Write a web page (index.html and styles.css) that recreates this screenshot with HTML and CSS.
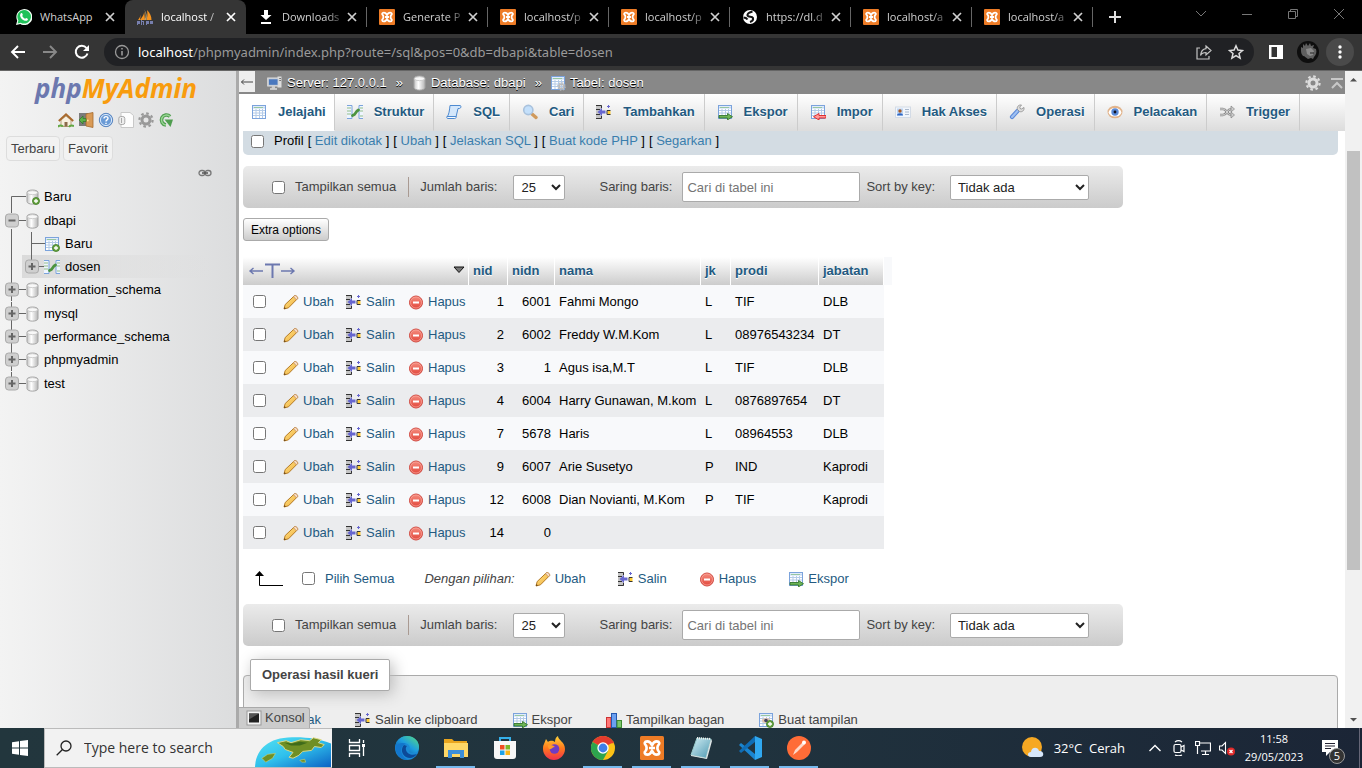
FILE: index.html
```html
<!DOCTYPE html>
<html lang="id">
<head>
<meta charset="utf-8">
<title>localhost / 127.0.0.1 / dbapi / dosen | phpMyAdmin</title>
<link rel="stylesheet" href="styles.css">
</head>
<body>
<svg class="defs" width="0" height="0" aria-hidden="true">
  <defs>
    <linearGradient id="g-db" x1="0" x2="1" y1="0" y2="0"><stop offset="0" stop-color="#c4c4c4"/><stop offset=".4" stop-color="#fff"/><stop offset="1" stop-color="#b4b4b4"/></linearGradient>
    <linearGradient id="g-pen" x1="0" x2="1" y1="0" y2="1"><stop offset="0" stop-color="#ffe98a"/><stop offset="1" stop-color="#f0a93a"/></linearGradient>
    <linearGradient id="g-red" x1="0" x2="0" y1="0" y2="1"><stop offset="0" stop-color="#f58e80"/><stop offset="1" stop-color="#e2463b"/></linearGradient>
    <linearGradient id="g-edge" x1="0" x2="1" y1="1" y2="0"><stop offset="0" stop-color="#0b4a9e"/><stop offset=".5" stop-color="#1d9de0"/><stop offset="1" stop-color="#5be07a"/></linearGradient>
    <linearGradient id="g-fox" x1="0" x2="0" y1="0" y2="1"><stop offset="0" stop-color="#ffd53a"/><stop offset=".5" stop-color="#ff7a1c"/><stop offset="1" stop-color="#f0304e"/></linearGradient>
    <linearGradient id="g-sea" x1="0" x2="1" y1="0" y2="1"><stop offset="0" stop-color="#57e3f2"/><stop offset=".5" stop-color="#2fc0ec"/><stop offset="1" stop-color="#0c62c4"/></linearGradient>
    <linearGradient id="g-note" x1="0" x2="1" y1="0" y2="1"><stop offset="0" stop-color="#d5f0f5"/><stop offset="1" stop-color="#4d98b2"/></linearGradient>
  </defs>
  <symbol id="whatsapp" viewBox="0 0 16 16"><path d="M0 16l1.200-4.300A8 8 0 1 1 4.300 15z" fill="#f4fff6"/><path d="M1.600 14.400l.8-3A6.800 6.800 0 1 1 4.800 13.700z" fill="#20c25a"/><path d="M5 4.200c.6-.4 1.100-.2 1.300.4l.5 1.200c.2.500-.6 1-.6 1.300.6 1.200 1.500 2 2.700 2.600.4.200.8-1 1.300-.8l1.500.8c.3.200.3.600 0 1.200-.5.900-1.700 1.200-2.900.8C6.300 10.900 4.900 9.300 4.200 7.300 3.900 6.200 4.200 4.900 5 4.200z" fill="#fff"/></symbol>
  <symbol id="sails" viewBox="0 0 16 16"><path d="M7 0c1 4-1 7.500-4 11h5zM10 1c3 3 4.500 6 4.500 10H9.500c1-3 1.200-7 .5-10zM4 4c0 2.500-1.500 5-3 7h2z" fill="#f6931e"/><path d="M7.500 1c1.500 3 1.500 7 0 10h2c.7-3 .5-7-2-10z" fill="#b8a070"/><path d="M0 12h3v3H1v1H0zm4-1h1v1h2v4H6v-3H5v3H4zm5 1h3v3h-2v1H9zm4 0h3v3h-3z" fill="#777fae"/></symbol>
  <symbol id="download" viewBox="0 0 16 16"><path d="M6 1h4v5h3.500L8 11 2.500 6H6zM3 13h10v2H3z" fill="#fff"/></symbol>
  <symbol id="xampp" viewBox="0 0 16 16"><rect width="16" height="16" rx="1" fill="#ee7c26"/><path d="M8 6.200C7 3.700 5.800 3.600 4.800 3.600 3 3.600 2.700 5.200 3.700 6c.7.600.7 1.100.7 2s0 1.400-.7 2c-1 .8-.7 2.400 1.100 2.400 1 0 2.200-.1 3.200-2.600 1 2.500 2.200 2.600 3.200 2.600 1.800 0 2.100-1.600 1.100-2.400-.7-.6-.7-1.100-.7-2s0-1.400.7-2c1-.8.700-2.400-1.100-2.400-1 0-2.200.1-3.200 2.600zM6 8h4" fill="none" stroke="#fff" stroke-width="1.800" stroke-linejoin="round"/></symbol>
  <symbol id="globe" viewBox="0 0 16 16"><circle cx="8" cy="8" r="7" fill="#fff"/><path d="M10.500 2.500C7 3.500 5 4.500 5.500 6.500 6.500 8.500 10 7 11 9c.5 2-1.500 3.500-3 4M1.500 8.500c2 0 3 .5 4 2" fill="none" stroke="#111" stroke-width="2"/></symbol>
  <symbol id="x" viewBox="0 0 12 12"><path d="M2 2l8 8M10 2l-8 8" stroke="currentColor" stroke-width="1.700"/></symbol>
  <symbol id="gear" viewBox="0 0 16 16"><circle cx="8" cy="8" r="6.600" fill="none" stroke="currentColor" stroke-width="2.200" stroke-dasharray="2.590"/><circle cx="8" cy="8" r="4" fill="none" stroke="currentColor" stroke-width="3"/></symbol>
  <symbol id="db" viewBox="0 0 16 16"><path d="M3 3.500v9C3 16 14 16 14 12.500v-9C14 .2 3 .2 3 3.500z" fill="url(#g-db)" stroke="#a4a4a4"/><ellipse cx="8.500" cy="3.700" rx="5" ry="2" fill="#f8f8f8" stroke="#bbb" stroke-width=".7"/></symbol>
  <symbol id="plus" viewBox="0 0 8 8"><circle cx="4" cy="4" r="3.500" fill="#6aa544" stroke="#3c7a22" stroke-width=".8"/><path d="M4 2v4M2 4h4" stroke="#fff" stroke-width="1.300"/></symbol>
  <symbol id="tbl" viewBox="0 0 16 16"><rect x="1.500" y="1.500" width="13" height="13" fill="#fff" stroke="#7ba3dc"/><path d="M2 3.500h12" stroke="#c3d9f5" stroke-width="2"/><path d="M2 6.500h12M2 9h12M2 11.500h12M5 5v9M8.500 5v9M11.500 5v9" stroke="#b4cbe8" stroke-width="1"/><path d="M3 3.500h9" stroke="#8cc28a" stroke-width=".8"/></symbol>
  <symbol id="struct" viewBox="0 0 16 16"><path d="M0 1.500h5v13H0M16 1.500h-4v13h4" fill="#eef5ff" stroke="#7ba3dc"/><path d="M0 4h4M0 7h4M0 10h4M13 4h3M13 7h3M13 12h3" stroke="#93bd85"/><path d="M5.500 11.500l2-1L10 7l1.500-1" fill="none" stroke="#4c9440" stroke-width="2.800" stroke-linecap="round"/></symbol>
  <symbol id="server" viewBox="0 0 16 16"><path d="M10 1h5v12h-5z" fill="#ddd" stroke="#888"/><path d="M11 3.500h3M11 5.500h3" stroke="#777"/><rect x=".7" y="3" width="11" height="8" fill="#b8c2d0" stroke="#ddd"/><rect x="2" y="4.300" width="8.500" height="5.500" fill="#4a78be"/><path d="M5 11h3v2.500H4.500z" fill="#ccc"/><path d="M3 14h7" stroke="#ddd" stroke-width="1.500"/></symbol>
  <symbol id="sql" viewBox="0 0 16 16"><path d="M4 1.500h10c1.500 0 1 3-.5 3H12L10 13H1c2-2 2.500-7 3-11.500z" fill="#d4e7fb" stroke="#4e8ad0"/><path d="M1 12.500h9c.3 1 0 2-1.300 2H2C.5 14.500.500 13 1 12.500z" fill="#f7fbff" stroke="#4e8ad0"/></symbol>
  <symbol id="find" viewBox="0 0 16 16"><path d="M10 10l4 3.500" stroke="#d09a5c" stroke-width="3.400" stroke-linecap="round"/><circle cx="6.300" cy="6" r="4.600" fill="#c4e0fb" stroke="#a9c2dd" stroke-width="1.600"/></symbol>
  <symbol id="insert" viewBox="0 0 16 16"><path d="M0 1h6v4H0zM0 11h6v4H0zM0 6h3v4H0z" fill="#c4c4c4"/><path d="M0 1.500h5.500v2.500M0 5.500h4M0 10.500h4M5.500 12v2.500H0" fill="none" stroke="#333"/><path d="M1.500 8L6 4v2.500h3.500v3H6V12z" fill="#6767cf"/><rect x="11.500" y="7" width="3" height="3.500" fill="#fc3"/><path d="M14.500 6.500h-3.500v4h3.500" fill="none" stroke="#333"/><path d="M12.500 1v3M11 2.500h3" stroke="#6767cf"/></symbol>
  <symbol id="export" viewBox="0 0 16 16"><use href="#tbl"/><path d="M2 11.500h8.500V9.500L15.500 12.700l-5 3.200V14H2z" fill="#6cb456" stroke="#2c6e22" stroke-width=".8"/></symbol>
  <symbol id="import" viewBox="0 0 16 16"><use href="#tbl"/><path d="M16 11.500H9v-2L3.500 12.700 9 16v-2h7z" fill="#f99" stroke="#d22" stroke-width=".9"/></symbol>
  <symbol id="priv" viewBox="0 0 16 16"><rect x=".5" y="3" width="15" height="10.500" fill="#f2f6fc" stroke="#d3dbe6"/><rect x="2" y="4.500" width="6" height="7" fill="#bcd5f5"/><circle cx="5" cy="7" r="1.700" fill="#a65a25"/><path d="M2 11.500c0-3 6-3 6 0z" fill="#2d66c4"/><path d="M10 5.500h4M10 8h4M10 10.500h4" stroke="#a9b8cc"/></symbol>
  <symbol id="wrench" viewBox="0 0 16 16"><path d="M8.500 7L3 13" stroke="#5d8ad8" stroke-width="4.200" stroke-linecap="round"/><path d="M8.500 7L3 13" stroke="#9fc0f2" stroke-width="2" stroke-linecap="round"/><path d="M12.500 1c-3-.5-5 2-4 4.500l2 2c2.500 1 5-1 4.500-4L12.500 5 11 4.500 10.800 3z" fill="#ddd" stroke="#8a8a8a" stroke-width=".8"/></symbol>
  <symbol id="eye" viewBox="0 0 16 16"><ellipse cx="8" cy="8" rx="7.500" ry="6.300" fill="#e2b48c"/><ellipse cx="8" cy="8.300" rx="6.300" ry="4.300" fill="#fff"/><circle cx="8" cy="8" r="3.700" fill="#5a8ad8"/><circle cx="8" cy="8" r="1.400" fill="#112"/></symbol>
  <symbol id="trigger" viewBox="0 0 16 16"><path d="M1 5h3c4 0 4 6 8 6h1M1 11h3c4 0 4-6 8-6h1" fill="none" stroke="#888" stroke-width="2.600"/><path d="M1 5h3c4 0 4 6 8 6h1M1 11h3c4 0 4-6 8-6h1" fill="none" stroke="#ddd" stroke-width="1"/><path d="M12 2l3.500 3L12 8zM12 8l3.500 3-3.500 3z" fill="#ccc" stroke="#777" stroke-width=".6"/></symbol>
  <symbol id="pencil" viewBox="0 0 16 16"><path d="M1 15l1.200-4.500L11.500 1.700c1-1 4 1.800 3 3L5.500 13.800z" fill="url(#g-pen)" stroke="#b57a24"/><path d="M10.500 2.700l1.200-1.100c1-.8 3.700 1.900 2.900 3l-1.200 1.200z" fill="#f8dcc4" stroke="#bb8a5c" stroke-width=".7"/><path d="M1 15l.6-2 1.300 1.400z" fill="#5b3d17"/></symbol>
  <symbol id="del" viewBox="0 0 16 16"><circle cx="8" cy="8.500" r="6.500" fill="url(#g-red)" stroke="#d0483f"/><circle cx="8" cy="8.500" r="5.500" fill="none" stroke="#f9a79d" stroke-width=".7"/><path d="M5 8.500h6" stroke="#fff" stroke-width="2"/></symbol>
  <symbol id="chart" viewBox="0 0 16 16"><rect x=".5" y="5.500" width="4.500" height="10" fill="#f77" stroke="#c33"/><rect x="5.500" y="1.500" width="5" height="14" fill="#6ca0f0" stroke="#2558b0"/><rect x="11" y="8.500" width="4.500" height="7" fill="#7cc56c" stroke="#3c8a30"/></symbol>
  <symbol id="console" viewBox="0 0 16 16"><rect x="1" y="1" width="14" height="14" fill="#f4f4f4" stroke="#999"/><rect x="3" y="3.500" width="10" height="9" fill="#222"/><path d="M3 3.500h10l-10 6z" fill="#555"/></symbol>
  <symbol id="t-first" viewBox="0 0 24 23"><path d="M24 11.500H9.500V23" fill="none" stroke="#666"/></symbol>
  <symbol id="t-box" viewBox="0 0 24 23"><rect x="3.500" y="5" width="13" height="13" rx="3" fill="#cfcfcf" stroke="#aaa"/><path d="M6.500 11.500h7" stroke="#666" stroke-width="2"/></symbol>
  <symbol id="t-minus" viewBox="0 0 24 23"><path d="M9.500 0v4M9.500 20v3M16 11.500h8" stroke="#666"/><use href="#t-box"/></symbol>
  <symbol id="t-plus" viewBox="0 0 24 23"><path d="M9.500 0v23M16 11.500h8" stroke="#666"/><use href="#t-box"/><path d="M10 8v7" stroke="#666" stroke-width="2"/></symbol>
  <symbol id="t-last" viewBox="0 0 24 23"><path d="M9.500 0v6M16 11.500h8" stroke="#666"/><use href="#t-box"/><path d="M10 8v7" stroke="#666" stroke-width="2"/></symbol>
  <symbol id="t-line" viewBox="0 0 20 23"><path d="M9.500 0v23" stroke="#666"/></symbol>
  <symbol id="t-tee" viewBox="0 0 24 23"><path d="M9.500 0v23M9.500 11.500H24" stroke="#666"/></symbol>
</svg>

<header class="tabstrip">
  <div class="tab"><svg class="i16"><use href="#whatsapp"/></svg><span class="tab-title">WhatsApp</span><button class="tab-x" aria-label="Tutup"><svg><use href="#x"/></svg></button></div>
  <div class="tab active"><svg class="i16"><use href="#sails"/></svg><span class="tab-title">localhost /</span><button class="tab-x" aria-label="Tutup"><svg><use href="#x"/></svg></button></div>
  <div class="tab line"><svg class="i16"><use href="#download"/></svg><span class="tab-title">Downloads</span><button class="tab-x" aria-label="Tutup"><svg><use href="#x"/></svg></button></div>
  <div class="tab line"><svg class="i16"><use href="#xampp"/></svg><span class="tab-title">Generate P</span><button class="tab-x" aria-label="Tutup"><svg><use href="#x"/></svg></button></div>
  <div class="tab line"><svg class="i16"><use href="#xampp"/></svg><span class="tab-title">localhost/p</span><button class="tab-x" aria-label="Tutup"><svg><use href="#x"/></svg></button></div>
  <div class="tab line"><svg class="i16"><use href="#xampp"/></svg><span class="tab-title">localhost/p</span><button class="tab-x" aria-label="Tutup"><svg><use href="#x"/></svg></button></div>
  <div class="tab line"><svg class="i16"><use href="#globe"/></svg><span class="tab-title">https://dl.d</span><button class="tab-x" aria-label="Tutup"><svg><use href="#x"/></svg></button></div>
  <div class="tab line"><svg class="i16"><use href="#xampp"/></svg><span class="tab-title">localhost/a</span><button class="tab-x" aria-label="Tutup"><svg><use href="#x"/></svg></button></div>
  <div class="tab line"><svg class="i16"><use href="#xampp"/></svg><span class="tab-title">localhost/a</span><button class="tab-x" aria-label="Tutup"><svg><use href="#x"/></svg></button></div>
  <button class="newtab" aria-label="Tab baru"><svg class="i16" viewBox="0 0 16 16"><path d="M8 2v12M2 8h12" stroke="#ddd" stroke-width="2"/></svg></button>
  <div class="winctl">
    <button aria-label="Cari tab"><svg viewBox="0 0 12 12"><path d="M1 3l5 5 5-5" fill="none" stroke="#777"/></svg></button>
    <button aria-label="Kecilkan"><svg viewBox="0 0 12 12"><path d="M1 6.500h10" stroke="#777"/></svg></button>
    <button aria-label="Pulihkan"><svg viewBox="0 0 12 12"><path d="M1.500 3.500h7v7h-7zM3.500 3V1.500h7v7H9" fill="none" stroke="#777"/></svg></button>
    <button aria-label="Tutup jendela"><svg viewBox="0 0 12 12"><path d="M1 1l10 10M11 1L1 11" stroke="#777"/></svg></button>
  </div>
</header>

<div class="toolbar">
  <button aria-label="Kembali"><svg class="i16" viewBox="0 0 16 16"><path d="M15 8H2.500M8 2L2 8l6 6" fill="none" stroke="#fff" stroke-width="1.900"/></svg></button>
  <button aria-label="Maju"><svg class="i16" viewBox="0 0 16 16"><path d="M1 8h12.500M8 2l6 6-6 6" fill="none" stroke="#888" stroke-width="1.900"/></svg></button>
  <button aria-label="Muat ulang"><svg class="i16" viewBox="0 0 16 16"><path d="M13.500 9.500A6 6 0 1 1 12.500 4L14 5.500" fill="none" stroke="#fff" stroke-width="2"/><path d="M15 1v6H9z" fill="#fff"/></svg></button>
  <div class="omnibox">
    <svg class="i16" viewBox="0 0 16 16"><circle cx="8" cy="8" r="6.500" fill="none" stroke="#999" stroke-width="1.300"/><path d="M8 7v4.500M8 4v1.600" stroke="#999" stroke-width="1.600"/></svg>
    <a class="url" href="#"><b>localhost</b>/phpmyadmin/index.php?route=/sql&amp;pos=0&amp;db=dbapi&amp;table=dosen</a>
    <svg class="i16" viewBox="0 0 16 16"><path d="M4 4H1v11h12v-3" fill="none" stroke="#c4c4c4" stroke-width="1.200"/><path d="M10 2l5 4.500-5 4.500V8.500c-3 0-4.500 1-5.500 3C5 7.500 7 5 10 4.700z" fill="none" stroke="#c4c4c4" stroke-width="1.200"/></svg>
    <svg class="i16" viewBox="0 0 16 16"><path d="M8 1.800l1.900 4.300 4.600.4-3.500 3 1.100 4.600L8 11.600l-4.100 2.500L5 9.500l-3.500-3 4.600-.4z" fill="none" stroke="#ddd" stroke-width="1.500"/></svg>
  </div>
  <button aria-label="Panel samping"><svg class="i16" viewBox="0 0 16 16"><path d="M1 1h14v14H1zM3.500 3v10H9V3z" fill="#fff" fill-rule="evenodd"/></svg></button>
  <button aria-label="Profil"><svg class="i22" viewBox="0 0 22 22"><circle cx="11" cy="11" r="11" fill="#0e0e0e"/><path d="M4 10l0-4 2 1 0-4 2 2 1-3 2 3 2-3 1 3 3-1-1 3 3 1c1 3 0 6-2 8l-1 2-2-1-3 1c-2-1-3-3-5-3-1-1-2-3-2-5z" fill="#5f5f5f"/><path d="M9 8l5-1 3 3-1 4-3 1-3-2z" fill="#8a8a8a"/><path d="M13 12h4" stroke="#222"/></svg></button>
  <button class="menu" aria-label="Menu"><svg class="i16" viewBox="0 0 16 16"><g fill="#fff"><circle cx="8" cy="3" r="1.700"/><circle cx="8" cy="8" r="1.700"/><circle cx="8" cy="13" r="1.700"/></g></svg></button>
</div>

<main class="page">
  <nav class="sidebar">
    <a class="logo" href="#"><span>php</span>MyAdmin</a>
    <div class="quick">
      <svg viewBox="0 0 16 16"><path d="M3 8v6.500h10V8L8 4z" fill="#f7efdf" stroke="#b9a27c"/><path d="M.8 9L8 2.300 15.200 9" fill="none" stroke="#a8682c" stroke-width="2"/><path d="M6.500 14.500V10h3v4.500" fill="#8a6a4a"/><path d="M0 15c1-2 4-2 5-.5M11 15c1-2 4-2 5-.5" stroke="#62a844" stroke-width="2" fill="none"/></svg>
      <svg viewBox="0 0 16 16"><path d="M1 1h9v13H1z" fill="#7b7b7b"/><path d="M8 2l7-1.500v15L8 14z" fill="#d99a55" stroke="#a5692f" stroke-width=".8"/><circle cx="9.800" cy="8.500" r=".9" fill="#ffe79b"/><path d="M1 8l4-4v2.500h3v3H5V12z" fill="#5cb14a" stroke="#2e7a26" stroke-width=".7"/></svg>
      <svg viewBox="0 0 16 16"><circle cx="8" cy="8" r="6.700" fill="#6a9bd6" stroke="#5a86c0"/><circle cx="8" cy="8" r="5.600" fill="none" stroke="#dbe9fa"/><path d="M6 6.500c0-2.500 4-2.500 4-.2C10 8 8 7.800 8 9.500M8 10.700v1.300" fill="none" stroke="#fff" stroke-width="1.400"/></svg>
      <svg viewBox="0 0 16 16"><path d="M3 .5h9l3.500 3v12H3z" fill="#fdfdfd" stroke="#c8c8c8"/><rect x=".8" y="4.500" width="6" height="8" rx="2" fill="#eee" stroke="#aaa"/><path d="M3.500 6v5" stroke="#aaa"/></svg>
      <svg class="g-grey" viewBox="0 0 16 16"><use href="#gear"/></svg>
      <svg viewBox="0 0 16 16"><path d="M12 4.500A5 5 0 1 0 8 13" fill="none" stroke="#4f9d4f" stroke-width="3.600"/><path d="M12 4.500A5 5 0 1 0 8 13" fill="none" stroke="#9ad795" stroke-width="1.400"/><path d="M6.500 7.500H15L12.500 15z" fill="#4f9d4f"/></svg>
    </div>
    <div class="recent"><button>Terbaru</button><button>Favorit</button></div>
    <div class="linkrow"><svg width="14" height="8" viewBox="0 0 14 8"><rect x="1" y="1.500" width="6" height="5" rx="2.500" fill="none" stroke="#777" stroke-width="1.300"/><rect x="7" y="1.500" width="6" height="5" rx="2.500" fill="none" stroke="#777" stroke-width="1.300"/><path d="M4 4h6" stroke="#555" stroke-width="1.500"/></svg></div>
    <ul class="tree">
      <li><div class="node"><svg class="tc"><use href="#t-first"/></svg><svg class="ico" viewBox="2 0 14 16"><use href="#db" width="16" height="16"/><use href="#plus" x="8" y="8" width="8" height="8"/></svg><a href="#">Baru</a></div></li>
      <li><div class="node"><svg class="tc"><use href="#t-minus"/></svg><svg class="ico" viewBox="2 0 14 16"><use href="#db" width="16" height="16"/></svg><a href="#">dbapi</a></div>
        <ul>
          <li class="node"><svg class="tl"><use href="#t-line"/></svg><svg class="tc"><use href="#t-tee"/></svg><svg class="ico2" viewBox="0 0 16 16"><use href="#tbl"/><use href="#plus" x="8" y="8" width="8" height="8"/></svg><a href="#">Baru</a></li>
          <li class="node"><svg class="tl"><use href="#t-line"/></svg><div class="node current"><svg class="tc"><use href="#t-last"/></svg><svg class="ico2" viewBox="0 0 16 16"><use href="#struct"/></svg><a href="#">dosen</a></div></li>
        </ul></li>
      <li><div class="node"><svg class="tc"><use href="#t-plus"/></svg><svg class="ico" viewBox="2 0 14 16"><use href="#db" width="16" height="16"/></svg><a href="#">information_schema</a></div></li>
      <li><div class="node"><svg class="tc"><use href="#t-plus"/></svg><svg class="ico" viewBox="2 0 14 16"><use href="#db" width="16" height="16"/></svg><a href="#">mysql</a></div></li>
      <li><div class="node"><svg class="tc"><use href="#t-plus"/></svg><svg class="ico" viewBox="2 0 14 16"><use href="#db" width="16" height="16"/></svg><a href="#">performance_schema</a></div></li>
      <li><div class="node"><svg class="tc"><use href="#t-plus"/></svg><svg class="ico" viewBox="2 0 14 16"><use href="#db" width="16" height="16"/></svg><a href="#">phpmyadmin</a></div></li>
      <li><div class="node"><svg class="tc"><use href="#t-last"/></svg><svg class="ico" viewBox="2 0 14 16"><use href="#db" width="16" height="16"/></svg><a href="#">test</a></div></li>
    </ul>
  </nav>
  <div class="resizer"></div>

  <section class="content">
    <div class="crumbs">
      <button class="collapse" aria-label="Sembunyikan panel"><svg width="14" height="8" viewBox="0 0 14 8"><path d="M1.500 4H13M4 1.500L1.500 4 4 6.500" fill="none" stroke="#444"/></svg></button>
      <svg class="i16"><use href="#server"/></svg><a href="#">Server: 127.0.0.1</a><span class="sep">»</span>
      <svg class="i16"><use href="#db"/></svg><a href="#">Database: dbapi</a><span class="sep">»</span>
      <svg class="i16" viewBox="0 0 16 16"><use href="#tbl"/><use href="#gear" x="7" y="7" width="9" height="9" color="#bbb"/></svg><a href="#">Tabel: dosen</a>
      <svg class="i16 set" viewBox="0 0 16 16"><use href="#gear"/></svg>
      <svg class="i16" viewBox="0 0 16 16"><path d="M2 4h12M3 13l5-5 5 5" fill="none" stroke="#c8c8c8" stroke-width="2"/></svg>
    </div>
    <nav class="topmenu">
      <a class="on" href="#"><svg class="i16"><use href="#tbl"/></svg>Jelajahi</a>
      <a href="#"><svg class="i16"><use href="#struct"/></svg>Struktur</a>
      <a href="#"><svg class="i16"><use href="#sql"/></svg>SQL</a>
      <a href="#"><svg class="i16"><use href="#find"/></svg>Cari</a>
      <a href="#"><svg class="i16"><use href="#insert"/></svg>Tambahkan</a>
      <a href="#"><svg class="i16"><use href="#export"/></svg>Ekspor</a>
      <a href="#"><svg class="i16"><use href="#import"/></svg>Impor</a>
      <a href="#"><svg class="i16"><use href="#priv"/></svg>Hak Akses</a>
      <a href="#"><svg class="i16"><use href="#wrench"/></svg>Operasi</a>
      <a href="#"><svg class="i16"><use href="#eye"/></svg>Pelacakan</a>
      <a href="#"><svg class="i16"><use href="#trigger"/></svg>Trigger</a>
    </nav>
    <div class="inner">
      <div class="profile"><input type="checkbox" id="profil"><label for="profil">Profil</label><span>[ <a href="#">Edit dikotak</a> ]</span><span>[ <a href="#">Ubah</a> ]</span><span>[ <a href="#">Jelaskan SQL</a> ]</span><span>[ <a href="#">Buat kode PHP</a> ]</span><span>[ <a href="#">Segarkan</a> ]</span></div>

      <form class="navbar">
        <input type="checkbox" id="all1"><label class="lab-all" for="all1">Tampilkan semua</label>
        <label class="lab-rows" for="rows1">Jumlah baris:</label><select class="rows" id="rows1"><option>25</option></select>
        <label class="lab-filter" for="filter1">Saring baris:</label><input class="filter" type="text" id="filter1" placeholder="Cari di tabel ini">
        <label class="lab-sort" for="sort1">Sort by key:</label><select class="sort" id="sort1"><option>Tidak ada</option></select>
      </form>

      <button class="extra">Extra options</button>

      <table class="results">
        <colgroup><col class="c-check"><col class="c-edit"><col class="c-copy"><col class="c-del"><col class="c-nid"><col class="c-nidn"><col class="c-nama"><col class="c-jk"><col class="c-prodi"><col class="c-jab"><col class="c-end"></colgroup>
        <thead><tr>
          <th colspan="4"><div class="corner"><svg width="48" height="18" viewBox="0 0 48 18"><path d="M2 9h13M5.500 6L2 9l3.500 3M46 9H33M42.500 6l3.500 3-3.500 3" fill="none" stroke="#6c78af" stroke-width="1.400"/><path d="M17 2.500h15M24.500 2.500V16" stroke="#6c78af" stroke-width="2"/></svg><svg width="12" height="10" viewBox="0 0 12 10"><path d="M1 1h10L6 6.500z" fill="#777" stroke="#111"/></svg></div></th>
          <th>nid</th><th>nidn</th><th>nama</th><th>jk</th><th>prodi</th><th>jabatan</th><th class="end"></th>
        </tr></thead>
        <tbody>
          <tr><td><input type="checkbox" aria-label="Pilih baris 1"></td><td><a class="act" href="#"><svg class="i16"><use href="#pencil"/></svg>Ubah</a></td><td><a class="act" href="#"><svg class="i16"><use href="#insert"/></svg>Salin</a></td><td><a class="act" href="#"><svg class="i16"><use href="#del"/></svg>Hapus</a></td><td class="n">1</td><td class="n">6001</td><td>Fahmi Mongo</td><td>L</td><td>TIF</td><td>DLB</td></tr>
          <tr><td><input type="checkbox" aria-label="Pilih baris 2"></td><td><a class="act" href="#"><svg class="i16"><use href="#pencil"/></svg>Ubah</a></td><td><a class="act" href="#"><svg class="i16"><use href="#insert"/></svg>Salin</a></td><td><a class="act" href="#"><svg class="i16"><use href="#del"/></svg>Hapus</a></td><td class="n">2</td><td class="n">6002</td><td>Freddy W.M.Kom</td><td>L</td><td>08976543234</td><td>DT</td></tr>
          <tr><td><input type="checkbox" aria-label="Pilih baris 3"></td><td><a class="act" href="#"><svg class="i16"><use href="#pencil"/></svg>Ubah</a></td><td><a class="act" href="#"><svg class="i16"><use href="#insert"/></svg>Salin</a></td><td><a class="act" href="#"><svg class="i16"><use href="#del"/></svg>Hapus</a></td><td class="n">3</td><td class="n">1</td><td>Agus isa,M.T</td><td>L</td><td>TIF</td><td>DLB</td></tr>
          <tr><td><input type="checkbox" aria-label="Pilih baris 4"></td><td><a class="act" href="#"><svg class="i16"><use href="#pencil"/></svg>Ubah</a></td><td><a class="act" href="#"><svg class="i16"><use href="#insert"/></svg>Salin</a></td><td><a class="act" href="#"><svg class="i16"><use href="#del"/></svg>Hapus</a></td><td class="n">4</td><td class="n">6004</td><td>Harry Gunawan, M.kom</td><td>L</td><td>0876897654</td><td>DT</td></tr>
          <tr><td><input type="checkbox" aria-label="Pilih baris 7"></td><td><a class="act" href="#"><svg class="i16"><use href="#pencil"/></svg>Ubah</a></td><td><a class="act" href="#"><svg class="i16"><use href="#insert"/></svg>Salin</a></td><td><a class="act" href="#"><svg class="i16"><use href="#del"/></svg>Hapus</a></td><td class="n">7</td><td class="n">5678</td><td>Haris</td><td>L</td><td>08964553</td><td>DLB</td></tr>
          <tr><td><input type="checkbox" aria-label="Pilih baris 9"></td><td><a class="act" href="#"><svg class="i16"><use href="#pencil"/></svg>Ubah</a></td><td><a class="act" href="#"><svg class="i16"><use href="#insert"/></svg>Salin</a></td><td><a class="act" href="#"><svg class="i16"><use href="#del"/></svg>Hapus</a></td><td class="n">9</td><td class="n">6007</td><td>Arie Susetyo</td><td>P</td><td>IND</td><td>Kaprodi</td></tr>
          <tr><td><input type="checkbox" aria-label="Pilih baris 12"></td><td><a class="act" href="#"><svg class="i16"><use href="#pencil"/></svg>Ubah</a></td><td><a class="act" href="#"><svg class="i16"><use href="#insert"/></svg>Salin</a></td><td><a class="act" href="#"><svg class="i16"><use href="#del"/></svg>Hapus</a></td><td class="n">12</td><td class="n">6008</td><td>Dian Novianti, M.Kom</td><td>P</td><td>TIF</td><td>Kaprodi</td></tr>
          <tr><td><input type="checkbox" aria-label="Pilih baris 14"></td><td><a class="act" href="#"><svg class="i16"><use href="#pencil"/></svg>Ubah</a></td><td><a class="act" href="#"><svg class="i16"><use href="#insert"/></svg>Salin</a></td><td><a class="act" href="#"><svg class="i16"><use href="#del"/></svg>Hapus</a></td><td class="n">14</td><td class="n">0</td><td></td><td></td><td></td><td></td></tr>
        </tbody>
      </table>

      <div class="bulk">
        <svg width="30" height="18" viewBox="0 0 30 18"><path d="M5.500 4v11.500H29" fill="none" stroke="#000"/><path d="M1 6l4.500-5L10 6z" fill="#000"/></svg>
        <input type="checkbox" id="pick"><label for="pick">Pilih Semua</label>
        <i>Dengan pilihan:</i>
        <button class="act"><svg class="i16"><use href="#pencil"/></svg>Ubah</button>
        <button class="act"><svg class="i16"><use href="#insert"/></svg>Salin</button>
        <button class="act"><svg class="i16"><use href="#del"/></svg>Hapus</button>
        <button class="act"><svg class="i16"><use href="#export"/></svg>Ekspor</button>
      </div>

      <form class="navbar">
        <input type="checkbox" id="all2"><label class="lab-all" for="all2">Tampilkan semua</label>
        <label class="lab-rows" for="rows2">Jumlah baris:</label><select class="rows" id="rows2"><option>25</option></select>
        <label class="lab-filter" for="filter2">Saring baris:</label><input class="filter" type="text" id="filter2" placeholder="Cari di tabel ini">
        <label class="lab-sort" for="sort2">Sort by key:</label><select class="sort" id="sort2"><option>Tidak ada</option></select>
      </form>

      <fieldset class="ops">
        <legend>Operasi hasil kueri</legend>
        <div class="oplist">
          <a class="act link" href="#"><svg class="i16"><use href="#console"/></svg>Cetak</a>
          <a class="act" href="#"><svg class="i16"><use href="#insert"/></svg>Salin ke clipboard</a>
          <a class="act" href="#"><svg class="i16"><use href="#export"/></svg>Ekspor</a>
          <a class="act" href="#"><svg class="i16"><use href="#chart"/></svg>Tampilkan bagan</a>
          <a class="act" href="#"><svg class="i16" viewBox="0 0 16 16"><use href="#tbl"/><ellipse cx="8" cy="8.500" rx="4" ry="2.500" fill="#e2c4aa"/><circle cx="8" cy="8.500" r="1.800" fill="#446"/><use href="#plus" x="8" y="8" width="8" height="8"/></svg>Buat tampilan</a>
        </div>
      </fieldset>
    </div>
    <button class="konsol"><svg class="i16"><use href="#console"/></svg>Konsol</button>
  </section>

  <div class="scrollbar">
    <svg viewBox="0 0 17 17"><path d="M5 10.500h7L8.500 7z" fill="#505050"/></svg>
    <div class="before"></div><div class="thumb"></div><div class="after"></div>
    <svg viewBox="0 0 17 17"><path d="M5 7h7l-3.500 3.500z" fill="#505050"/></svg>
  </div>
</main>

<footer class="taskbar">
  <button class="start" aria-label="Start"><svg class="i16" viewBox="0 0 16 16"><path d="M0 2.200L7 1.200v6.300H0zM8 1l8-1v7.500H8zM0 8.500h7v6.300l-7-1zM8 8.500h8V16l-8-1.100z" fill="#fff"/></svg></button>
  <label class="search"><svg class="i16" viewBox="0 0 16 16"><circle cx="10" cy="6" r="5" fill="none" stroke="#222" stroke-width="1.300"/><path d="M6.500 9.500L.7 15.300" stroke="#222" stroke-width="1.300"/></svg><input type="text" placeholder="Type here to search">
    <svg class="earth" viewBox="0 0 78 39"><path d="M0 39C1 22 12 9 38 8.500 52 8 66 10 78 15v24z" fill="url(#g-sea)"/><path d="M23 14l9-2 5 2 10-3 9 1 4-3 8 2-3 3 6 2-3 3-7-1-3 4-9 1-4 4-6 3-4-1 4-5-8-3-2-3z" fill="#6f8f25" stroke="#dcd98a"/><path d="M30 14l8 1 8-2 8 1-8 3-9 0z" fill="#3f6b1a"/><path d="M7 30l6-4 8-1-3 5-7 4zM46 32l5-1 1 3h-4z" fill="#6f8f25" stroke="#c9d883" stroke-width=".6"/></svg>
  </label>
  <button class="app view" aria-label="Task view"><svg width="18" height="18" viewBox="0 0 18 18"><path d="M1.500 0v3.500h10V0M1.500 18v-3.500h10V18M1.500 6.500h10v5h-10z" fill="none" stroke="#fff" stroke-width="1.300"/><path d="M15.500 1v3M15.500 8v9" stroke="#fff" stroke-width="1.300"/><path d="M14 5h3v3h-3z" fill="#fff"/></svg></button>
  <button class="app" aria-label="Edge"><svg viewBox="0 0 24 24"><circle cx="12" cy="12" r="12" fill="#1b8ad6"/><path d="M.3 10C2 3 7 0 12 0c8 0 12 6 12 11 0 4-3 6-6 6-3 0-5-1-4-3 2-3 0-7-5-7-4 0-7 1-8.700 3z" fill="url(#g-edge)"/><path d="M.3 10C3 7 8 6 11 8c-4 1-6 5-4 10 1 3 4 5 6 6C5 24 0 18 .3 10z" fill="#1276cc"/><path d="M9 9c-3 3-3 9 2 12 4 2 8 1 11-3-5 2-10 0-11-4-.500-2 0-3 1-4z" fill="#0c4a99"/></svg></button>
  <button class="app run" aria-label="File Explorer"><svg viewBox="0 0 24 24"><path d="M0 3h8l2 2h13v16H0z" fill="#e9a51e"/><path d="M0 7h24v14H0z" fill="#ffd867"/><path d="M4 22v-8h16v8h-4v-4H8v4z" fill="#3d8fd8"/></svg></button>
  <button class="app" aria-label="Store"><svg viewBox="0 0 24 24"><path d="M7 6V2h10v4" fill="none" stroke="#35b0ea" stroke-width="2"/><path d="M1 5h22v15c0 2-1 3-3 3H4c-2 0-3-1-3-3z" fill="#f7f7f7"/><path d="M7 9h4.500v4.500H7z" fill="#f04e23"/><path d="M12.500 9H17v4.500h-4.500z" fill="#7db928"/><path d="M7 14.500h4.500V19H7z" fill="#1ea2e8"/><path d="M12.500 14.500H17V19h-4.500z" fill="#fbb61a"/></svg></button>
  <button class="app" aria-label="Firefox"><svg viewBox="0 0 24 24"><path d="M2 8l2-5 2 3c3-2 5-1 7 0 0-3 1-5 3-6 0 4 7 6 7 13 0 6-5 11-11 11S1 19 1 13c0-2 0-3 1-5z" fill="url(#g-fox)"/><circle cx="12.500" cy="13" r="4.800" fill="#6f3cc4"/><path d="M6 9c3 0 5 0 7 2-3 0-3 3-6 2-1-1-1-3-1-4z" fill="#ff9a2a"/></svg></button>
  <button class="app run" aria-label="Chrome"><svg viewBox="0 0 24 24"><circle cx="12" cy="12" r="12" fill="#fbc116"/><path d="M12 12L1.600 6A12 12 0 0 1 22.400 6z" fill="#e33b2e"/><path d="M12 12L1.600 6A12 12 0 0 0 12 24l5-9z" fill="#2da44e"/><path d="M12 6.500h10.600" stroke="#e33b2e" stroke-width="1.500"/><circle cx="12" cy="12" r="5.700" fill="#fff"/><circle cx="12" cy="12" r="4.400" fill="#3f7fe8"/></svg></button>
  <button class="app run" aria-label="XAMPP"><svg><use href="#xampp"/></svg></button>
  <button class="app run" aria-label="Notepad"><svg viewBox="0 0 24 24"><path d="M8 2l14 1-5 19-15-3z" fill="url(#g-note)" stroke="#9cc"/><path d="M22 3l1 2-5 18-16-3v-1l15 3z" fill="#dfe6e8"/><path d="M8 2l14 1" stroke="#eee" stroke-width="2" stroke-dasharray="1 1"/></svg></button>
  <button class="app run" aria-label="Visual Studio Code"><svg viewBox="0 0 24 24"><path d="M17 6v12L3 7 1 9l16 15z" fill="#1a85d0"/><path d="M17 0v6L3 17l-2-2z" fill="#0f6db5"/><path d="M17 0l7 3v18l-7 3z" fill="#30a8f0"/></svg></button>
  <button class="app run" aria-label="Postman"><svg viewBox="0 0 24 24"><circle cx="12" cy="12" r="12" fill="#ff6c37"/><path d="M16 6l-8 8-2 5 4-3 8-8z" fill="#ffd8c8"/><circle cx="17" cy="6.500" r="2" fill="#fff"/></svg></button>

  <div class="weather"><svg width="24" height="24" viewBox="0 0 24 24"><circle cx="11" cy="11" r="10" fill="#f6a823"/><path d="M10 21c-4 0-4-5 0-5 0-5 7-6 8-1 5-1 6 6 1 6z" fill="#d6e6fa"/></svg><span>32°C&nbsp; Cerah</span></div>
  <div class="tray">
    <svg class="i16" viewBox="0 0 16 16"><path d="M2.500 11L8 5.500l5.500 5.500" fill="none" stroke="#fff" stroke-width="1.400"/></svg>
    <svg class="i16" viewBox="0 0 16 16"><rect x="3" y="4.500" width="7" height="8" rx="1.500" fill="none" stroke="#fff" stroke-width="1.200"/><path d="M10 7l3-1.500v6L10 10M4 2c2-1.500 5-1.500 7 0M4 15c2 1 5 1 7 0" fill="none" stroke="#fff" stroke-width="1.200"/></svg>
    <svg class="i16" viewBox="0 0 16 16"><path d="M4 3h11.500v8H6M.5 1.500h4v4h-4zM2.500 5.500V14M10.500 11v3M7 14.500h7" fill="none" stroke="#fff" stroke-width="1.200"/></svg>
    <svg class="i16" viewBox="0 0 16 16"><path d="M.5 6H3l3.500-3.500v11L3 10H.5z" fill="none" stroke="#fff" stroke-width="1.100"/><circle cx="12" cy="11.500" r="4" fill="#e02a2a"/><path d="M10.500 10l3 3M13.500 10l-3 3" stroke="#fff" stroke-width="1.200"/></svg>
  </div>
  <div class="clock"><span>11:58</span><span>29/05/2023</span></div>
  <button class="notif" aria-label="Notifikasi"><svg viewBox="0 0 18 18"><path d="M1 1h16v12H9l-4 4v-4H1z" fill="#fff"/><path d="M4 4.500h10M4 7h10M4 9.500h6" stroke="#223"/></svg><span>5</span></button>
  <div class="peek"></div>
</footer>
</body>
</html>
```
FILE: styles.css
```css
* { box-sizing: border-box; }
body {
  margin: 0;
  height: 100vh;
  display: flex;
  flex-direction: column;
  overflow: hidden;
  font: 13px/16px "Liberation Sans", Arial, sans-serif;
  color: #444;
  background: #fff;
}
button { font: inherit; color: inherit; background: none; border: 0; padding: 0; }
a { color: #235a81; text-decoration: none; }
svg { display: block; flex: none; }
.defs { position: absolute; }
.i16 { width: 16px; height: 16px; }
.i22 { width: 22px; height: 22px; }
input[type="checkbox"] { width: 13px; height: 13px; margin: 0; flex: none; }

/* browser tabs */
.tabstrip { display: flex; height: 34px; padding-left: 4px; background: #000; flex: none; }
.tab {
  width: 121px;
  padding: 0 9px 0 12px;
  display: flex;
  align-items: center;
  color: #d0d0d0;
  font: 11px/16px "Open Sans", "Noto Sans", sans-serif;
}
.tab-title {
  flex: 1;
  min-width: 0;
  margin: 0 0 0 8px;
  white-space: nowrap;
  -webkit-mask-image: linear-gradient(90deg, #000 70%, transparent);
  mask-image: linear-gradient(90deg, #000 70%, transparent);
}
.tab:first-child .tab-title { -webkit-mask-image: none; mask-image: none; }
.tab-x svg { width: 12px; height: 12px; }
.tab.active { background: #353535; color: #fff; border-radius: 8px 8px 0 0; }
.tab.line { background: linear-gradient(#666, #666) right center / 1px 20px no-repeat; }
.newtab { margin-left: 14px; }
.winctl { display: flex; margin-left: auto; height: 28px; }
.winctl button { width: 46px; display: grid; place-items: center; }
.winctl svg { width: 12px; height: 12px; }

.toolbar {
  display: flex;
  align-items: center;
  height: 37px;
  padding: 0 6px 0 2px;
  background: #353535;
  border-bottom: 1px solid #666;
  flex: none;
}
.toolbar button { width: 32px; height: 28px; display: grid; place-items: center; flex: none; }
.toolbar .menu { background: #4a4a4a; border-radius: 14px; width: 28px; margin: 0 2px; }
.omnibox {
  flex: 1;
  height: 28px;
  margin: 0 6px;
  padding: 0 10px;
  display: flex;
  align-items: center;
  gap: 16px;
  border-radius: 14px;
  background: #202124;
}
.url { flex: 1; margin-left: -8px; color: #9a9a9a; font: 13px/20px "Noto Sans", "Open Sans", sans-serif; white-space: nowrap; overflow: hidden; }
.url b { color: #fff; font-weight: 400; }

/* page */
.page { flex: 1; min-height: 0; display: flex; }
.sidebar {
  width: 236px;
  flex: none;
  padding-top: 3px;
  background: linear-gradient(90deg, #f3f3f3, #dcddde);
}
.resizer { width: 3px; background: #aaa; flex: none; }
.logo {
  display: block;
  text-align: center;
  padding-right: 4px;
  font: italic 700 26px/28px "Noto Sans", "Open Sans", sans-serif;
  color: #f89c0e;
}
.logo span { color: #6c78af; }
.quick { display: flex; gap: 4px; padding: 10px 0 0 58px; }
.quick svg { width: 16px; height: 16px; }
.g-grey { color: #999; }
.recent { display: flex; gap: 3px; padding: 8px 6px 0; }
.recent button {
  height: 25px;
  padding: 0 4px;
  border: 1px solid #ddd;
  border-radius: 4px;
  background: #f2f2f2;
}
.linkrow { display: flex; justify-content: flex-end; padding: 8px 24px 0 0; }
.tree, .tree ul { list-style: none; margin: 0; padding: 0; }
.tree { padding: 8px 0 0 2px; }
.tree > li:nth-child(3n) { padding-bottom: 1px; }
.tree > li:first-child { padding-bottom: 1px; background: linear-gradient(#666, #666) 9px 100% / 1px 1px no-repeat; }
.node { display: flex; align-items: center; height: 23px; }
.node a { color: #000; }
.tc { width: 24px; height: 23px; }
.tl { width: 20px; height: 23px; }
.ico { width: 14px; height: 16px; margin-right: 4px; }
.ico2 { width: 16px; height: 16px; margin: 0 5px 0 -2px; }
.current { width: 188px; background: linear-gradient(90deg, #dadada, #dcdcdc00); }

.content { flex: 1; min-width: 0; position: relative; overflow: hidden; display: flex; flex-direction: column; }
.crumbs {
  display: flex;
  align-items: center;
  height: 23px;
  background: #888;
  color: #fff;
  text-shadow: 0 1px 0 #000;
  flex: none;
}
.crumbs a { color: #fff; margin-left: 4px; }
.crumbs .sep { margin: 0 8px 0 9px; }
.collapse { width: 16px; height: 21px; margin-right: 12px; align-self: flex-start; display: grid; place-items: center; background: #eee; }
.crumbs .set { margin: 0 8px 0 auto; color: #ddd; }
.topmenu { display: flex; height: 37px; background: linear-gradient(#fff, #dcdcdc); flex: none; }
.topmenu a {
  display: flex;
  align-items: center;
  gap: 11px;
  padding: 0 9px 1px 12px;
  border-right: 1px solid #ccc;
  border-bottom: 1px solid #ddd;
  font-weight: 700;
  white-space: nowrap;
  text-shadow: 0 1px 0 #fff;
}
.topmenu .on { background: #fff; border-bottom-color: #fff; padding-right: 8px; }
.inner { padding: 0 7px 0 4px; }
.profile {
  display: flex;
  align-items: center;
  gap: 4px;
  height: 24px;
  padding: 0 8px 4px;
  border-radius: 0 0 5px 5px;
  background: #d3dce3;
  color: #000;
}
.profile label { margin-left: 6px; }
.profile a { color: #3a7ead; }

.navbar {
  display: flex;
  align-items: center;
  width: fit-content;
  height: 42px;
  margin-top: 11px;
  padding: 0 34px 0 29px;
  border-radius: 5px;
  background: linear-gradient(#ebebeb, #cbcbcb);
  white-space: nowrap;
}
.lab-all { margin: 0 12px 0 10px; }
.lab-rows { padding-left: 11px; margin-right: 16px; line-height: 20px; border-left: 1px solid #a99a92; }
.lab-filter { margin: 0 10px 0 34px; }
.lab-sort { margin: 0 15px 0 6px; }
select, .filter { font: inherit; color: #222; background: #fff; border: 1px solid #aaa; border-radius: 2px; }
select { height: 25px; padding: 0 3px; }
.rows { width: 52px; }
.sort { width: 139px; }
.filter { width: 178px; height: 30px; padding: 0 4px; }
.filter::placeholder { color: #757575; }

.extra {
  display: block;
  height: 23px;
  margin-top: 10px;
  padding: 0 7px;
  border: 1px solid #aaa;
  border-radius: 3px;
  background: linear-gradient(#fff, #ccc);
  color: #000;
  font-size: 12px;
}

.results { margin-top: 16px; border-collapse: collapse; table-layout: fixed; width: 649px; color: #000; }
.c-check { width: 36px; } .c-edit { width: 63px; } .c-copy { width: 62px; } .c-del { width: 65px; }
.c-nid { width: 39px; } .c-nidn { width: 47px; } .c-nama { width: 146px; } .c-jk { width: 30px; }
.c-prodi { width: 88px; } .c-jab { width: 65px; } .c-end { width: 8px; }
.results th {
  height: 28px;
  padding: 0 4px;
  text-align: left;
  color: #235a81;
  text-shadow: 0 1px 0 #fff;
  background: linear-gradient(90deg, transparent calc(100% - 1px), #fff 0), linear-gradient(#fff, #ccc);
}
.results .end { background: #f8f9fb; padding: 0; }
.corner { display: flex; align-items: center; justify-content: space-between; padding: 0 0 0 1px; }
.results td { height: 33px; padding: 0 0 0 4px; white-space: nowrap; background: #f8f9fb; }
.results tr:nth-child(even) td { background: #ebecee; }
.results td:first-child { padding-left: 10px; }
.results td:first-child input { display: block; }
.results .n { text-align: right; padding-right: 4px; }
.act { display: flex; align-items: center; gap: 4px; color: #235a81; white-space: nowrap; }

.bulk { display: flex; align-items: center; height: 55px; padding: 4px 0 0 11px; }
.bulk input { margin: 0 10px 0 18px; }
.bulk label { color: #235a81; }
.bulk i { margin: 0 20px 0 30px; }
.bulk .act + .act { margin-left: 32px; }
.bulk + .navbar { margin-top: 0; }

.ops { margin: 13px 0 0; padding: 19px 23px 80px; border: 1px solid #aaa; border-radius: 4px 4px 0 0; background: #eee; min-width: 0; }
.ops legend {
  margin-left: -17px;
  padding: 7px 11px;
  border: 1px solid #aaa;
  border-radius: 2px;
  background: #fff;
  font-weight: 700;
  box-shadow: 3px 3px 15px #bbb;
}
.oplist { display: flex; gap: 34px; line-height: 20px; }
.oplist .act { color: #444; }
.oplist .link { color: #235a81; }
.konsol {
  position: absolute;
  left: 0;
  bottom: 0;
  display: flex;
  align-items: center;
  gap: 3px;
  height: 21px;
  padding: 0 4px 0 7px;
  background: #ccc;
  border: solid #aaa;
  border-width: 1px 1px 0 0;
  border-radius: 0 3px 0 0;
}

.scrollbar { width: 17px; display: flex; flex-direction: column; background: #f1f1f1; flex: none; }
.scrollbar svg { width: 17px; height: 17px; }
.before { flex: 63; }
.thumb { flex: 419; margin: 0 2px; background: #c1c1c1; }
.after { flex: 141; }

/* taskbar */
.taskbar {
  display: flex;
  align-items: stretch;
  height: 40px;
  flex: none;
  background: linear-gradient(90deg, #22363d, #20333e 55%, #1b2536);
  color: #fff;
  font-family: "Open Sans", "Noto Sans", sans-serif;
}
.start { width: 44px; display: grid; place-items: center; padding-right: 4px; }
.search {
  width: 288px;
  display: flex;
  align-items: center;
  padding-left: 11px;
  background: #f2f2f2;
  border: 1px solid #bbb;
  border-right: 0;
}
.search input {
  flex: 1;
  min-width: 0;
  margin-left: 12px;
  padding: 0;
  border: 0;
  background: none;
  font: 14px/20px "Open Sans", "Noto Sans", sans-serif;
}
.search input::placeholder { color: #333; }
.earth { width: 78px; height: 38px; }
.app { width: 49px; display: grid; place-items: center; border: solid transparent; border-width: 0 5px; }
.app svg { width: 24px; height: 24px; }
.app.view { width: 50px; }
.app.view svg { width: 18px; height: 18px; }
.app.run { background: linear-gradient(#76b9ed, #76b9ed) bottom / 100% 2px no-repeat; background-clip: padding-box; }
.weather { margin-left: auto; display: flex; align-items: center; gap: 9px; font-size: 13px; white-space: nowrap; }
.tray { display: flex; align-items: center; gap: 8px; margin-left: 22px; }
.clock { display: flex; flex-direction: column; justify-content: center; align-items: center; width: 60px; margin-left: 9px; font-size: 11px; line-height: 18px; }
.notif { position: relative; width: 55px; padding-right: 3px; display: grid; place-items: center; }
.notif svg { width: 18px; height: 18px; }
.notif span {
  position: absolute;
  right: 14px;
  bottom: 4px;
  width: 16px;
  height: 16px;
  border: 1px solid #999;
  border-radius: 8px;
  background: #333;
  font-size: 11px;
  line-height: 14px;
}
.peek { width: 3px; border-left: 1px solid #667; }
```
